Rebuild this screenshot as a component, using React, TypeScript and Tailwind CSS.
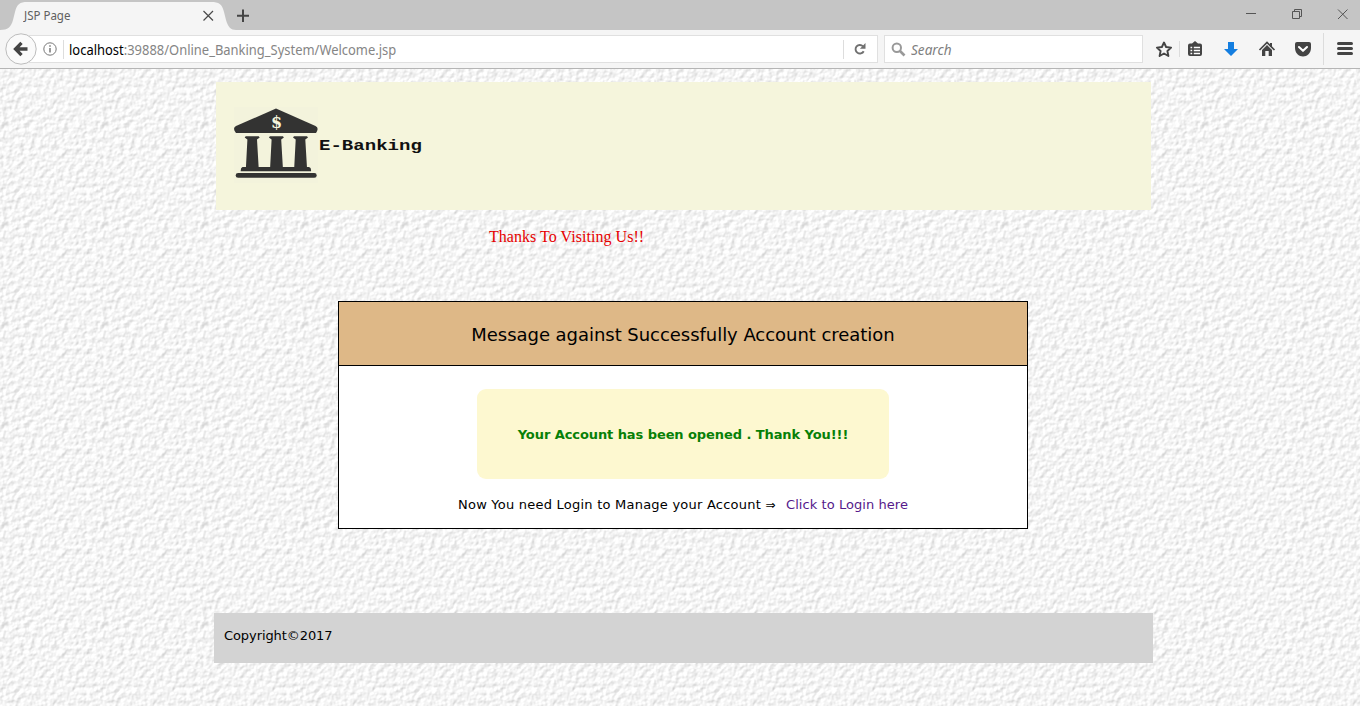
import React from "react";

function TabStrip() {
  return (
    <div className="flex h-[30px] bg-[#c5c5c5] text-[#444]">
      <div className="relative h-[30px] w-[236px] shrink-0">
        <svg className="absolute inset-0" width="236" height="30" viewBox="0 0 236 30">
          <path d="M0 30C8 30 11 27 13 20L15 12C17 4 20 2 27 2H211C219 2 222 4 224 12L226 20C228 27 231 30 236 30Z" fill="#f5f5f5" />
          <path d="M203.500 11L213 20.500M213 11L203.500 20.500" stroke="#4a4a4a" strokeWidth="1.200" />
        </svg>
        <div className="relative pl-6 pt-[7px] font-['Noto_Sans',sans-serif] text-[12px] leading-[18px] text-[#606060]">
          <span className="inline-block origin-left scale-x-[0.96]">JSP Page</span>
        </div>
      </div>
      <svg className="shrink-0" width="14" height="30" viewBox="0 0 14 30">
        <path d="M7 9.500V22M1 15.800H13" stroke="#444" strokeWidth="2" />
      </svg>
      <svg className="ml-auto" width="120" height="30" viewBox="0 0 120 30" fill="none" stroke="#555" strokeWidth="1">
        <path d="M6 13.500H16" />
        <path d="M52.500 11.500H59.500V18.500H52.500ZM54.500 11.500V9.500H61.500V16.500H59.500" />
        <path d="M98 9.500L107.500 19M107.500 9.500L98 19" />
      </svg>
    </div>
  );
}

function Toolbar() {
  return (
    <div className="flex h-[39px] border-b border-[#b5b5b5] bg-[#f5f5f5] pl-[5px] font-['Noto_Sans',sans-serif] text-[14px]">
      <svg className="z-10 mt-[3px] shrink-0" width="32" height="32" viewBox="0 0 32 32">
        <circle cx="16" cy="16" r="15.200" fill="#fafafa" stroke="#bcbcbc" />
        <path d="M22.500 16H11M16.500 9.800L10.500 16L16.500 22.200" fill="none" stroke="#444" strokeWidth="3.300" />
      </svg>
      <div className="-ml-2 mt-[5px] flex h-[28px] w-[849px] shrink-0 items-center border border-[#e0e0e0] bg-white pl-[13px]">
        <svg className="shrink-0" width="14" height="14" viewBox="0 0 14 14" fill="none" stroke="#777">
          <circle cx="7" cy="7" r="6.200" />
          <path d="M7 6V10.500M7 3.300V4.800" strokeWidth="1.500" />
        </svg>
        <div className="ml-[6px] h-[19px] w-px bg-[#ddd]" />
        <div className="ml-[5px] whitespace-nowrap text-[#858585]">
          <span className="inline-block origin-left scale-x-[0.925]">
            <span className="text-black">localhost</span>:39888/Online_Banking_System/Welcome.jsp
          </span>
        </div>
        <div className="ml-auto h-[19px] w-px bg-[#ddd]" />
        <svg className="ml-[9px] mr-[10px] shrink-0" width="14" height="14" viewBox="0 0 14 14">
          <path d="M10 4.300A4.300 4.300 0 1 0 10.700 9.200" fill="none" stroke="#707070" strokeWidth="1.900" />
          <path d="M12.500 1V6.800H6.900Z" fill="#707070" />
        </svg>
      </div>
      <div className="ml-[6px] mt-[5px] flex h-[28px] w-[259px] shrink-0 items-center border border-[#e0e0e0] bg-white pl-[6px]">
        <svg width="15" height="15" viewBox="0 0 15 15" fill="none" stroke="#999">
          <circle cx="5.800" cy="5.800" r="4.200" strokeWidth="2" />
          <path d="M9 9L13.500 13.500" strokeWidth="2.600" />
        </svg>
        <span className="ml-[5px] origin-left scale-x-[0.97] italic text-[#808080]">Search</span>
      </div>
      <svg className="shrink-0" width="217" height="38" viewBox="1143 30 217 38">
        <path d="M1164 42.500L1166.100 47L1171.100 47.600L1167.400 51L1168.400 56L1164 53.500L1159.600 56L1160.600 51L1156.900 47.600L1161.900 47Z" fill="none" stroke="#444" strokeWidth="1.900" strokeLinejoin="round" />
        <path d="M1179.500 41V57M1323.500 33V65" stroke="#dcdcdc" />
        <path d="M1190 43.500H1192L1195 41L1198 43.500H1200Q1202 43.500 1202 45.500V54Q1202 56 1200 56H1190Q1188 56 1188 54V45.500Q1188 43.500 1190 43.500Z" fill="#444" />
        <path d="M1190.500 47.500H1192.200M1193.800 47.500H1200M1190.500 50.500H1192.200M1193.800 50.500H1200M1190.500 53.500H1192.200M1193.800 53.500H1200" stroke="#fff" strokeWidth="1.500" />
        <path d="M1228 42H1234V49H1238L1231 56L1224 49H1228Z" fill="#147ee0" />
        <path d="M1259.500 50L1267 42.500L1274.500 50" fill="none" stroke="#444" strokeWidth="1.700" />
        <path d="M1267 45L1272 50V56H1268.700V51H1265.300V56H1262V50ZM1270 43H1272V47H1270Z" fill="#444" />
        <path d="M1297 42H1309Q1311 42 1311 44V48C1311 53 1307 56.500 1303 56.500S1295 53 1295 48V44Q1295 42 1297 42Z" fill="#444" />
        <path d="M1299 47L1303 50.800L1307 47" fill="none" stroke="#fff" strokeWidth="2.100" strokeLinecap="round" strokeLinejoin="round" />
        <path d="M1338.500 43.500H1351.500M1338.500 48.500H1351.500M1338.500 53.500H1351.500" stroke="#444" strokeWidth="3" strokeLinecap="round" />
      </svg>
    </div>
  );
}

function PaperTexture() {
  return (
    <svg className="col-start-1 row-start-1 h-[637px] w-full" aria-hidden="true">
      <defs>
        <filter id="paper" x="0" y="0" width="100%" height="100%" colorInterpolationFilters="sRGB">
          <feTurbulence type="fractalNoise" baseFrequency="0.18 0.18" numOctaves="4" seed="8" stitchTiles="stitch" />
          <feDiffuseLighting surfaceScale="0.55" diffuseConstant="1.12" lightingColor="#ffffff">
            <feDistantLight azimuth="225" elevation="59" />
          </feDiffuseLighting>
        </filter>
        <pattern id="tile" width="100" height="100" patternUnits="userSpaceOnUse">
          <rect width="100" height="100" filter="url(#paper)" />
        </pattern>
      </defs>
      <rect width="100%" height="100%" fill="url(#tile)" />
    </svg>
  );
}

function BankLogo() {
  return (
    <svg width="85" height="76" viewBox="0 0 85 76" fill="#333332">
      <rect width="84" height="76" fill="#f3f3dc" />
      <path d="M42 1.500L81.500 19Q85.500 21 82 26H2Q-2 21 2 19Z" />
      {[10.7, 34.9, 59].map((x) => (
        <g key={x} transform={`translate(${x} 0)`}>
          <path d="M1 29.300H14L15 30.500L12.300 32.500L14 61H1.200L2.700 32.500L0 30.500Z" />
        </g>
      ))}
      <path d="M8.500 60H75Q77.500 60.500 77 64.300H6.700Q6.500 60.500 8.500 60Z" />
      <rect x="1.700" y="66" width="81" height="4.800" rx="2.400" />
      <text x="42.500" y="21" textAnchor="middle" fill="#f5f5dc" fontFamily="DejaVu Serif, serif" fontWeight="bold" fontSize="16">$</text>
    </svg>
  );
}

export default function App() {
  return (
    <div className="h-[706px] w-full overflow-hidden">
      <TabStrip />
      <Toolbar />
      <div className="grid h-[637px] grid-cols-1 grid-rows-1 bg-[#f1f1f1]">
        <PaperTexture />
        <main className="z-10 col-start-1 row-start-1 flex flex-col pt-[13px] font-['DejaVu_Sans',sans-serif] text-[13px] text-black">
          <header className="ml-[216px] flex h-[128px] w-[935px] bg-[#f5f5dc] pl-[18px] pt-[25px]">
            <BankLogo />
            <span className="mt-[30px] h-5 origin-left scale-x-[1.27] whitespace-nowrap font-['Liberation_Mono',monospace] text-[15px] font-bold leading-5 text-[#111]">E-Banking</span>
          </header>
          <p className="ml-[489px] mt-[17px] h-5 whitespace-nowrap font-['Liberation_Serif',serif] text-[16px] leading-5 tracking-[0.04px] text-[#e60000]">Thanks To Visiting Us!!</p>
          <section className="ml-[338px] mt-[54px] flex h-[228px] w-[690px] flex-col items-center border border-black bg-white">
            <h1 className="flex h-[64px] w-full items-center justify-center border-b border-black bg-[#deb887] pt-[2px] text-[18px]">
              <span className="whitespace-nowrap tracking-[-0.04px]">Message against Successfully Account creation</span>
            </h1>
            <div className="mt-[23px] flex h-[90px] w-[412px] items-center justify-center rounded-[9px] bg-[#fdf8d0] pt-[2px] font-bold text-[#078007]">
              <span className="whitespace-nowrap tracking-[-0.08px]">Your Account has been opened . Thank You!!!</span>
            </div>
            <p className="mt-[16px] flex h-5 w-[450px] justify-between whitespace-nowrap leading-5">
              <span className="tracking-[0.23px]">Now You need Login to Manage your Account <span className="text-[12px]">⇒</span></span>
              <a className="tracking-[0.06px] text-[#551a8b]">Click to Login here</a>
            </p>
          </section>
          <footer className="ml-[214px] mt-[84px] h-[50px] w-[939px] bg-[#d3d3d3] pl-[10px] pt-[13px] leading-5 tracking-[-0.08px]">Copyright©2017</footer>
        </main>
      </div>
    </div>
  );
}
